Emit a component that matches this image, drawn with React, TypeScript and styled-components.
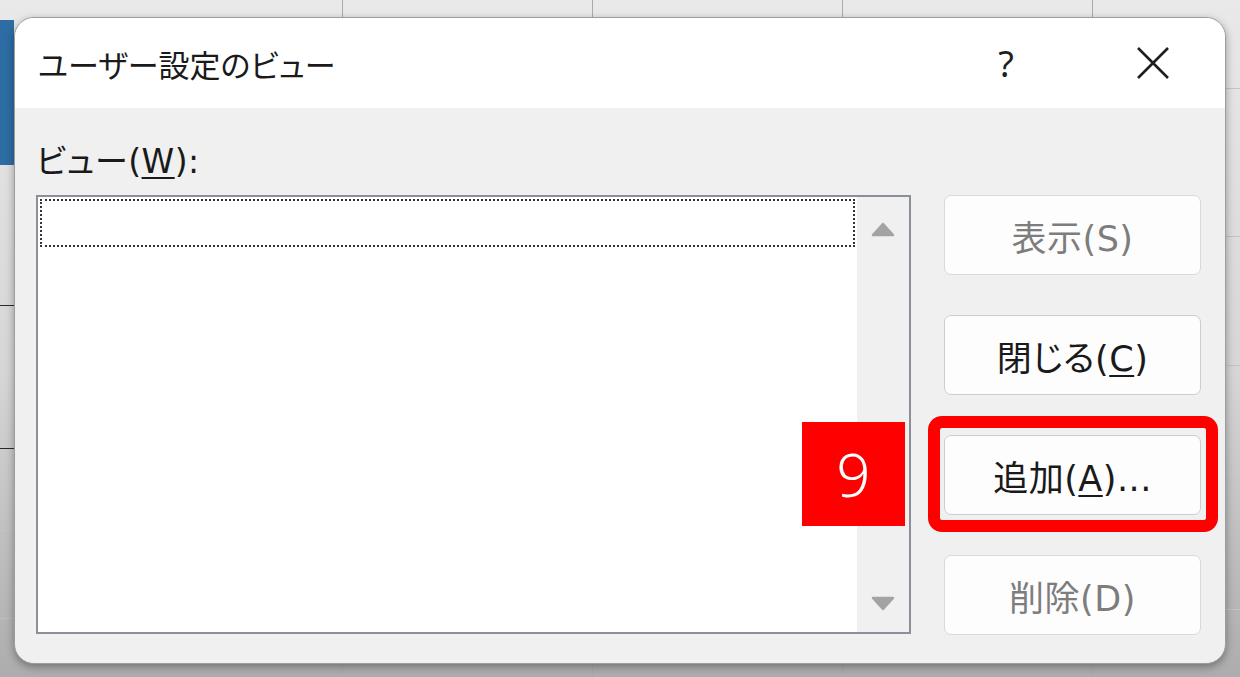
import React from 'react'
import styled, { createGlobalStyle } from 'styled-components'

const GlobalStyle = createGlobalStyle`
  html, body {
    margin: 0;
    padding: 0;
    background: #d6d6d6;
  }
  * {
    box-sizing: border-box;
  }
`

const FONT = `"DejaVu Sans", "Noto Sans CJK JP", sans-serif`

//Excel sheet seen behind the dialog
const Sheet = styled.div`
  width: 1240px;
  height: 677px;
  overflow: hidden;
  padding: 17px 14px 0 14px;
  font-family: ${FONT};
  background:
    linear-gradient(#2e6ca4, #2e6ca4) no-repeat 0 20px / 14px 145px,
    linear-gradient(#2b2b2b, #2b2b2b) no-repeat 0 305px / 14px 1px,
    linear-gradient(#2b2b2b, #2b2b2b) no-repeat 0 448px / 14px 1px,
    linear-gradient(#bdbdbd, #bdbdbd) no-repeat 0 533px / 14px 1px,
    linear-gradient(#bdbdbd, #bdbdbd) no-repeat 0 618px / 14px 1px,
    linear-gradient(#c4c4c4, #c4c4c4) no-repeat 1226px 88px / 14px 1px,
    linear-gradient(#c4c4c4, #c4c4c4) no-repeat 1226px 236px / 14px 1px,
    linear-gradient(#c4c4c4, #c4c4c4) no-repeat 1226px 365px / 14px 1px,
    linear-gradient(#c4c4c4, #c4c4c4) no-repeat 1226px 478px / 14px 1px,
    linear-gradient(#c4c4c4, #c4c4c4) no-repeat 1226px 609px / 14px 1px,
    repeating-linear-gradient(90deg, #a9a9a9 0 1px, transparent 1px 250px) no-repeat 342px 0 / 898px 100%,
    linear-gradient(#e9e9e9 0%, #d6d6d6 55%, #adadad 100%);
`

const Dialog = styled.div`
  width: 1212px;
  height: 647px;
  display: flex;
  flex-direction: column;
  border: 1px solid #9d9d9d;
  border-radius: 20px;
  overflow: hidden;
  background: #f0f0f0;
  box-shadow: 0 3px 8px rgba(0, 0, 0, 0.35);
`

const TitleBar = styled.div`
  height: 90px;
  flex-shrink: 0;
  display: flex;
  align-items: center;
  padding: 0 22px 0 23px;
  background: #ffffff;
`

const Title = styled.h1`
  margin: 0;
  font-size: 31px;
  font-weight: 400;
  color: #1a1a1a;
  font-feature-settings: 'palt';
`

const TitleActions = styled.div`
  margin-left: auto;
  display: flex;
  gap: 47px;
`

const TitleButton = styled.span`
  width: 100px;
  height: 50px;
  display: grid;
  place-items: center;
  font-family: 'Noto Sans', sans-serif;
  font-size: 36px;
  color: #1f1f1f;
`

const Body = styled.div`
  flex: 1;
  padding: 34px 24px 0 21px;
`

const Label = styled.div`
  height: 40px;
  line-height: 40px;
  font-size: 33px;
  color: #1a1a1a;
  font-feature-settings: 'palt';
  letter-spacing: 0.5px;
`

const Mnemonic = styled.span`
  text-decoration: underline;
  text-decoration-thickness: 2px;
  text-underline-offset: 4px;
`

const Row = styled.div`
  display: flex;
  gap: 33px;
  margin-top: 13px;
`

const ListBox = styled.div`
  width: 875px;
  height: 439px;
  display: flex;
  border: 2px solid #8a8f98;
  background: #ffffff;
`

const ListItems = styled.div`
  flex: 1;
  padding: 2px;
`

const FocusRow = styled.div`
  height: 48px;
  border: 2px dotted #333333;
`

const ScrollBar = styled.div`
  width: 52px;
  display: flex;
  flex-direction: column;
  justify-content: space-between;
  align-items: center;
  padding: 25px 0 21px;
  background: #f0f0f0;
`

const ButtonColumn = styled.div`
  width: 257px;
  display: flex;
  flex-direction: column;
  gap: 40px;
`

const ButtonSlot = styled.div`
  position: relative;
`

const DialogButton = styled.button<{ $disabled?: boolean }>`
  width: 257px;
  height: 80px;
  padding: 0;
  border: 1px solid ${(p) => (p.$disabled ? '#d9d9d9' : '#c9ced6')};
  border-radius: 7px;
  background: #fdfdfd;
  font-family: ${FONT};
  font-size: 35px;
  color: ${(p) => (p.$disabled ? '#7d7d7d' : '#1a1a1a')};
  font-feature-settings: 'palt';
  letter-spacing: 0.5px;
`

const Highlight = styled.div`
  position: absolute;
  top: -19px;
  left: -16px;
  right: -17px;
  bottom: -17px;
  border: 12px solid #ff0000;
  border-radius: 14px;
  pointer-events: none;
`

const StepBadge = styled.div`
  position: absolute;
  top: -13px;
  right: calc(100% + 39px);
  width: 103px;
  height: 104px;
  display: grid;
  place-items: center;
  background: #ff0000;
  color: #ffffff;
  font-family: 'Noto Sans', sans-serif;
  font-size: 60px;
  font-weight: 300;
  line-height: 1;
`

const Arrow = ({ down }: { down?: boolean }) => (
  <svg width='24' height='15' viewBox='0 0 24 15'>
    <path
      d={down ? 'M2 2 H22 L12 13 Z' : 'M2 13 H22 L12 2 Z'}
      fill='#a3a3a3'
      stroke='#a3a3a3'
      strokeWidth='2.5'
      strokeLinejoin='round'
    />
  </svg>
)

const CloseIcon = () => (
  <svg width='34' height='34' viewBox='0 0 34 34'>
    <path d='M2 2 L32 32 M32 2 L2 32' stroke='#1f1f1f' strokeWidth='2.6' />
  </svg>
)

const App = () => {
  return (
    <>
      <GlobalStyle />
      <Sheet>
        <Dialog>
          <TitleBar>
            <Title>ユーザー設定のビュー</Title>
            <TitleActions>
              <TitleButton>?</TitleButton>
              <TitleButton>
                <CloseIcon />
              </TitleButton>
            </TitleActions>
          </TitleBar>
          <Body>
            <Label>
              ビュー(<Mnemonic>W</Mnemonic>):
            </Label>
            <Row>
              <ListBox>
                <ListItems>
                  <FocusRow />
                </ListItems>
                <ScrollBar>
                  <Arrow />
                  <Arrow down />
                </ScrollBar>
              </ListBox>
              <ButtonColumn>
                <DialogButton $disabled>表示(S)</DialogButton>
                <DialogButton>
                  閉じる(<Mnemonic>C</Mnemonic>)
                </DialogButton>
                <ButtonSlot>
                  <DialogButton>
                    追加(<Mnemonic>A</Mnemonic>)...
                  </DialogButton>
                  <Highlight />
                  <StepBadge>9</StepBadge>
                </ButtonSlot>
                <DialogButton $disabled>削除(D)</DialogButton>
              </ButtonColumn>
            </Row>
          </Body>
        </Dialog>
      </Sheet>
    </>
  )
}

export default App
